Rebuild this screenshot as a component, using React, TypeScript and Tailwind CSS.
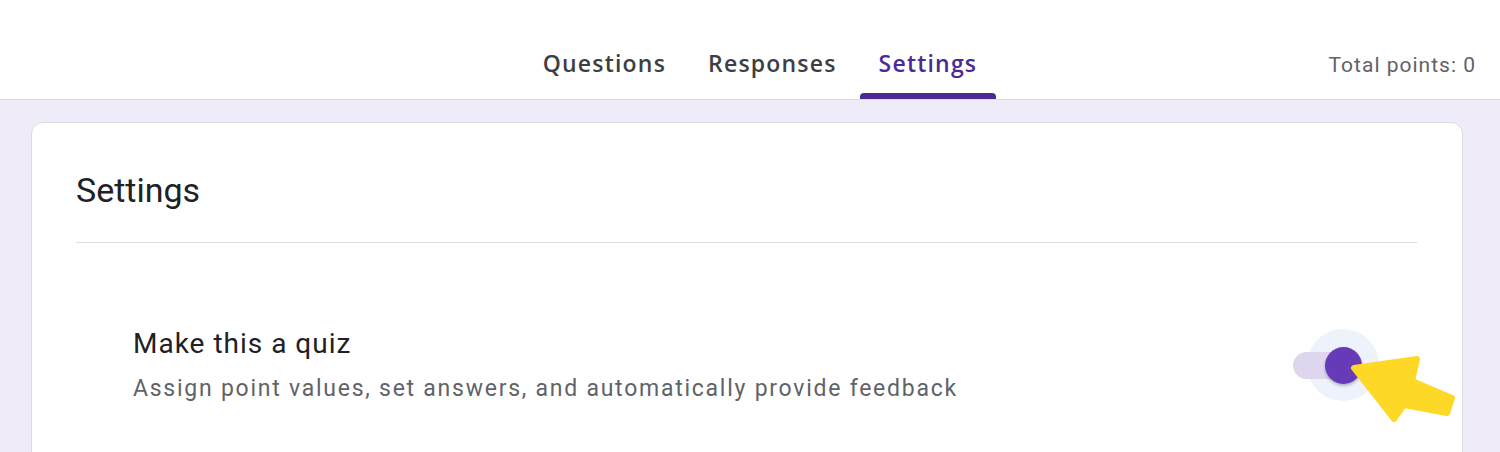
import React from "react";

const tabs = [
  { t: "Questions", a: false },
  { t: "Responses", a: false },
  { t: "Settings", a: true },
];

export default function App() {
  return (
    <div
      className="relative w-[1500px] h-[452px] overflow-hidden bg-[#f0ebf8]"
      style={{ fontFamily: "Roboto, 'Liberation Sans', sans-serif" }}
    >
      <header className="h-[100px] bg-white border-b border-[#dadce0] grid grid-cols-[1fr_auto_1fr]">
        <div />
        <nav className="flex h-full pl-[20px]">
          {tabs.map((x) => (
            <div key={x.t} className="relative h-full flex items-end px-[21px] pb-[21px]">
              <span
                className={`text-[23px] leading-[30px] font-semibold tracking-[1.2px] ${x.a ? "text-[#4c2a93]" : "text-[#3c4043]"}`}
                style={{ fontFamily: "'Open Sans', Roboto, sans-serif" }}
              >
                {x.t}
              </span>
              {x.a && <div className="absolute left-[2px] right-[2px] bottom-0 h-[6px] rounded-t-[4px] bg-[#4c2a93]" />}
            </div>
          ))}
        </nav>
        <div className="flex items-end justify-end pr-[24px] pb-[20px]">
          <span className="text-[21px] leading-[28px] tracking-[1px] text-[#5f6368]">Total points: 0</span>
        </div>
      </header>
      <main className="pt-[22px] pl-[31px] pr-[37px]">
        <section className="bg-white border border-[#dadce0] rounded-[12px] h-[400px] pl-[44px] pr-[45px]">
          <h1 className="pt-[47px] pb-[32px] border-b border-[#dadce0] text-[34px] leading-[40px] text-[#202124]">Settings</h1>
          <div className="flex items-start pl-[57px] pt-[84px]">
            <div className="flex-1 flex flex-col gap-[13px]">
              <div className="text-[28px] leading-[34px] tracking-[1px] text-[#202124]">Make this a quiz</div>
              <div className="text-[23px] leading-[30px] tracking-[1.75px] text-[#5f6368]">
                Assign point values, set answers, and automatically provide feedback
              </div>
            </div>
            <div className="relative w-[86px] h-[72px] mt-[2px] mr-[38px]">
              <div className="absolute left-[14px] top-0 w-[72px] h-[72px] rounded-full bg-[#edf2fb]" />
              <div className="absolute left-0 top-[23px] w-[54px] h-[27px] rounded-full bg-[#ddd6ee]" />
              <div className="absolute left-[14px] top-0 w-[72px] h-[72px] flex items-center justify-center">
                <div className="w-[37px] h-[37px] rounded-full bg-[#673ab7] shadow-[0_2px_3px_rgba(0,0,0,0.25)]" />
              </div>
            </div>
          </div>
        </section>
      </main>
      <svg className="absolute left-0 top-0 pointer-events-none" width="1500" height="452">
        <path
          d="M1354 368 L1417 359 L1412 381 L1452 398 L1447 413 L1404 405 L1394 419 Z"
          fill="#fdd827"
          stroke="#fdd827"
          strokeWidth="6"
          strokeLinejoin="round"
        />
      </svg>
    </div>
  );
}
